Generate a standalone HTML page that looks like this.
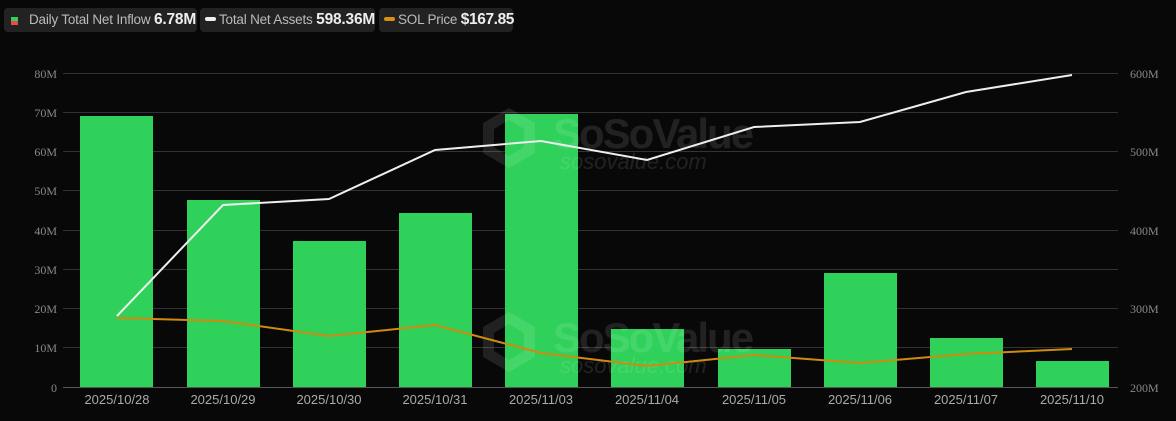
<!DOCTYPE html><html><head><style>
body{margin:0;background:#080808;width:1176px;height:421px;overflow:hidden;font-family:"Liberation Sans",sans-serif}
.lg{position:absolute;top:8px;height:24px;box-sizing:border-box;background:#222;border-radius:4px;color:#bbb;font-size:13.5px;line-height:24px;padding:0 5px;white-space:nowrap;letter-spacing:-0.2px}
.lg b{color:#eee;font-size:15.5px}
</style></head><body>
<div class="lg" style="left:4px;width:193px"><span style="display:inline-block;width:7px;height:8px;background:linear-gradient(#2fd15a 50%,#f04848 50%);margin:0 11px 0 2px;vertical-align:-1px"></span>Daily Total Net Inflow <b>6.78M</b></div>
<div class="lg" style="left:200px;width:175px"><span style="display:inline-block;width:11px;height:4px;background:#eee;border-radius:2px;margin-right:3px;vertical-align:3px"></span>Total Net Assets <b>598.36M</b></div>
<div class="lg" style="left:379px;width:134px;padding-right:2px"><span style="display:inline-block;width:11px;height:4px;background:#d89010;border-radius:2px;margin-right:3px;vertical-align:3px"></span>SOL Price <b style="letter-spacing:-0.4px">$167.85</b></div>
<svg width="1176" height="421" style="position:absolute;left:0;top:0">
<g stroke="#333" stroke-width="1">
<line x1="63" x2="1118" y1="73.5" y2="73.5"/><line x1="63" x2="1118" y1="112.5" y2="112.5"/><line x1="63" x2="1118" y1="151.5" y2="151.5"/><line x1="63" x2="1118" y1="190.5" y2="190.5"/><line x1="63" x2="1118" y1="230.5" y2="230.5"/><line x1="63" x2="1118" y1="269.5" y2="269.5"/><line x1="63" x2="1118" y1="308.5" y2="308.5"/><line x1="63" x2="1118" y1="347.5" y2="347.5"/><line x1="63" x2="1118" y1="387.5" y2="387.5" stroke="#555"/>
</g>
<g font-family="Liberation Serif,serif" font-size="12" fill="#888" text-anchor="end">
<text x="57" y="78">80M</text><text x="57" y="117">70M</text><text x="57" y="156">60M</text><text x="57" y="195">50M</text><text x="57" y="235">40M</text><text x="57" y="274">30M</text><text x="57" y="313">20M</text><text x="57" y="352">10M</text><text x="57" y="392">0</text>
</g>
<g font-family="Liberation Serif,serif" font-size="12" fill="#888">
<text x="1130" y="78">600M</text><text x="1130" y="156">500M</text><text x="1130" y="235">400M</text><text x="1130" y="313">300M</text><text x="1130" y="392">200M</text>
</g>
<g fill="#2fd15a">
<rect x="80" y="116" width="73" height="271"/><rect x="187" y="200" width="73" height="187"/><rect x="293" y="241" width="73" height="146"/><rect x="399" y="213" width="73" height="174"/><rect x="505" y="114" width="73" height="273"/><rect x="611" y="329" width="73" height="58"/><rect x="718" y="349" width="73" height="38"/><rect x="824" y="273" width="73" height="114"/><rect x="930" y="338" width="73" height="49"/><rect x="1036" y="361" width="73" height="26"/>
</g>
<g font-family="Liberation Sans,sans-serif" font-weight="bold" fill="#fff" opacity="0.1">
<path d="M509 108 l26 15 v30 l-26 15 l-26 -15 v-30z M509 120 l15 9 v18 l-15 9 l-15 -9 v-18z" fill-rule="evenodd"/>
<text x="553" y="148" font-size="42" letter-spacing="-2">SoSoValue</text><text x="560" y="169" font-size="22" font-weight="normal" font-style="italic">sosovalue.com</text>
<path d="M509 312 l26 15 v30 l-26 15 l-26 -15 v-30z M509 324 l15 9 v18 l-15 9 l-15 -9 v-18z" fill-rule="evenodd"/>
<text x="553" y="352" font-size="42" letter-spacing="-2">SoSoValue</text><text x="560" y="373" font-size="22" font-weight="normal" font-style="italic">sosovalue.com</text>
</g>
<polyline fill="none" stroke="#eee" stroke-width="2" points="117,316 223,205 329,199 435,150 541,141 647,160 754,127 860,122 966,92 1072,75"/>
<polyline fill="none" stroke="#d08a10" stroke-width="2" points="117,318 223,321 329,336 435,325 541,353 647,366 754,355 860,363 966,354 1072,349"/>
<g font-size="13" fill="#aaa" text-anchor="middle">
<text x="117" y="404">2025/10/28</text><text x="223" y="404">2025/10/29</text><text x="329" y="404">2025/10/30</text><text x="435" y="404">2025/10/31</text><text x="541" y="404">2025/11/03</text><text x="647" y="404">2025/11/04</text><text x="754" y="404">2025/11/05</text><text x="860" y="404">2025/11/06</text><text x="966" y="404">2025/11/07</text><text x="1072" y="404">2025/11/10</text>
</g>
</svg>
</body></html>
